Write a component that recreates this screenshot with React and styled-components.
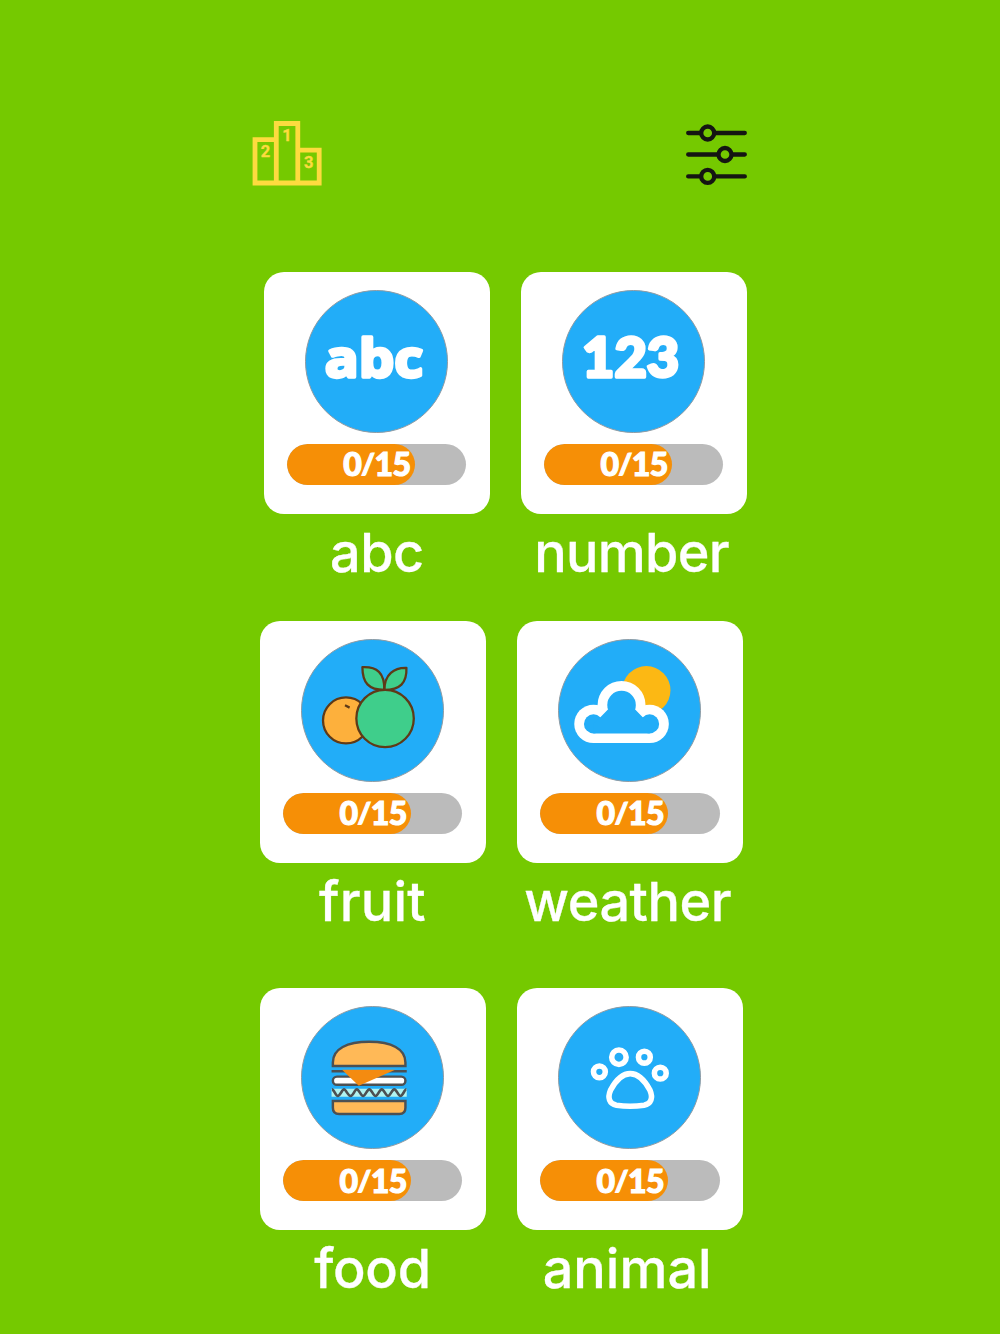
import React from "react";
import styled, { createGlobalStyle } from "styled-components";

const GlobalStyle = createGlobalStyle`
  *, *::before, *::after { box-sizing: border-box; }
  body {
    margin: 0;
    background: #75c900;
    font-family: Inter, "Liberation Sans", sans-serif;
  }
`;

const Screen = styled.main`
  width: 1000px;
  height: 1334px;
  overflow: hidden;
  padding-top: 120px;
  background: #75c900;
`;

const Toolbar = styled.header`
  display: flex;
  justify-content: space-between;
  align-items: flex-start;
  height: 151.8px;
  padding: 0 252px;
`;

const IconButton = styled.button`
  display: block;
  padding: 0;
  border: 0;
  background: none;
  svg { display: block; }
`;

const Row = styled.section`
  display: flex;
  gap: 31.2px;
  height: ${(p) => p.$height}px;
  padding-left: ${(p) => p.$indent}px;
`;

const Topic = styled.article`
  display: flex;
  flex-direction: column;
  align-items: center;
  width: 226px;
`;

const Card = styled.div`
  display: flex;
  flex-direction: column;
  align-items: center;
  width: 226px;
  height: 241.8px;
  flex: none;
  padding: 17.8px 0.6px 0 0;
  border-radius: 20px;
  background: #fff;
`;

const Badge = styled.svg`
  display: block;
  width: 143.2px;
  height: 143.2px;
  flex: none;
  border-radius: 50%;
  background: #22adf8;
  border: 0.6px solid #8f9ba3;
`;

const Track = styled.div`
  width: 179.4px;
  height: 41px;
  margin-top: 10.8px;
  border-radius: 21px;
  background: #bbb;
  overflow: hidden;
`;

const Fill = styled.div`
  display: flex;
  align-items: center;
  justify-content: flex-end;
  width: 128px;
  height: 100%;
  padding-right: 4.2px;
  border-radius: 21px;
  background: #f68f06;
`;

const Score = styled.span`
  padding-bottom: 1.5px;
  font: 900 32px/39px Lato, "Open Sans", sans-serif;
  letter-spacing: -0.5px;
  color: #fff;
  -webkit-text-stroke: 1.2px #fff;
`;

const Slash = styled.span`
  font-size: 29px;
  line-height: 1;
  vertical-align: 2.5px;
`;

const Label = styled.h2`
  margin: 6px 0 0;
  padding-right: ${(p) => p.$shift}px;
  font-family: Inter, "Liberation Sans", sans-serif;
  font-size: 54px;
  font-weight: 500;
  line-height: 66px;
  letter-spacing: ${(p) => p.$tracking}px;
  color: #fff;
  white-space: nowrap;
  -webkit-text-stroke: 0.3px #fff;
`;

const BadgeText = styled.text`
  font-family: ${(p) => p.$family}, sans-serif;
  font-weight: ${(p) => p.$weight};
  fill: #fff;
  stroke: #fff;
  stroke-width: 10px;
  stroke-linejoin: round;
`;

const Digit = styled.text`
  font: 700 16.5px Roboto, sans-serif;
  fill: #fddb3f;
  stroke: #fddb3f;
  stroke-width: 0.3px;
  text-anchor: middle;
`;

const PodiumIcon = () => (
  <svg width="70" height="67" viewBox="252 120 70 67">
    <path
      d="M276.3 183V123.5H297.8V183M276.3 139.7H255V183H319.2V150.2H297.8"
      fill="none"
      stroke="#fddb3f"
      strokeWidth="4.8"
    />
    <Digit x="265.5" y="157">2</Digit>
    <Digit x="287" y="141.2">1</Digit>
    <Digit x="308.7" y="167.7">3</Digit>
  </svg>
);

const SlidersIcon = () => (
  <svg width="62" height="67" viewBox="686 120 62 67">
    <g stroke="#151512" strokeWidth="4.3" strokeLinecap="round" fill="#75c900">
      <path d="M688.2 133H744.8M688.2 154.5H744.8M688.2 176.4H744.8" />
      <circle cx="707.7" cy="133" r="6.5" />
      <circle cx="725" cy="154.5" r="6.5" />
      <circle cx="707.7" cy="176.4" r="6.5" />
    </g>
  </svg>
);

const AbcBadge = () => (
  <Badge viewBox="164 89 430 430">
    <BadgeText $family={'"Open Sans"'} $weight={700} x="221" y="350" fontSize="160" textLength="300" lengthAdjust="spacingAndGlyphs">abc</BadgeText>
  </Badge>
);

const NumberBadge = () => (
  <Badge viewBox="156 89 430 430">
    <BadgeText $family="Lato" $weight={900} x="214" y="350" fontSize="166" textLength="296" lengthAdjust="spacingAndGlyphs">123</BadgeText>
  </Badge>
);

const FruitBadge = () => (
  <Badge viewBox="33 28 430 430">
    <g stroke="#5f3a17" strokeWidth="7" strokeLinejoin="round">
      <circle cx="167" cy="273" r="70" fill="#fdb03c" />
      <circle cx="286" cy="267" r="87.5" fill="#3fce8b" />
      <path d="M284 180C284 128 262 109 217 111C217 158 236 180 284 180Z" fill="#3fce8b" />
      <path d="M284 180C284 132 314 112 351 113C353 159 331 180 284 180Z" fill="#3fce8b" />
      <path d="M164 227L178 234" fill="none" />
    </g>
  </Badge>
);

const WeatherBadge = () => (
  <Badge viewBox="24 28 430 430">
    <circle cx="290" cy="181" r="73.5" fill="#fcb814" />
    <g fill="#fff">
      <circle cx="129" cy="283.5" r="58.5" />
      <circle cx="300" cy="283.5" r="58.5" />
      <circle cx="214.5" cy="226" r="73" />
      <path d="M129 260H300V342H129Z" />
    </g>
    <g fill="#22adf8">
      <circle cx="129" cy="283.5" r="29" />
      <circle cx="300" cy="283.5" r="29" />
      <circle cx="214.5" cy="226" r="43.5" />
      <path d="M150 263L173 240H256L279 263L300 283V312.5H129V283Z" />
    </g>
  </Badge>
);

const BurgerBadge = () => (
  <Badge viewBox="33 18 430 430">
    <g stroke="#4c5053" strokeWidth="7.5" fill="#ffb957">
      <path d="M127 198V187C127 145 170 124 238 124C305 124 348 145 348 187V198Z" />
      <path d="M127 304H348V325Q348 344 329 344H146Q127 344 127 325Z" />
      <path d="M123 213.5H352" />
      <rect x="127" y="230" width="221" height="25" rx="12.5" fill="#fff" />
    </g>
    <path d="M155 209H317L206 258Z" fill="#f48b10" />
    <path d="M123 267H352V291H123Z" fill="#b2f3f0" />
    <path
      d="M124 269C131 269 135 289 142 289S155 269 161 269S173 289 181 289S193 269 200 269S212 289 219 289S231 269 238 269S250 289 257 289S269 269 276 269S288 289 295 289S307 269 314 269S326 289 333 289S345 269 351 269"
      fill="none"
      stroke="#4c5053"
      strokeWidth="8"
    />
  </Badge>
);

const PawBadge = () => (
  <Badge viewBox="24 18 430 430">
    <g fill="none" stroke="#fff" strokeWidth="17">
      <circle cx="147" cy="215.5" r="18" />
      <circle cx="206.5" cy="171" r="22" />
      <circle cx="284" cy="171" r="18" />
      <circle cx="332.5" cy="219.5" r="18" />
      <path d="M241 221C213 221 194 247 181 271C171 295 177 313 199 317C225 321 256 321 283 317C305 313 311 295 301 271C288 247 269 221 241 221Z" />
    </g>
  </Badge>
);

const rows = [
  {
    indent: 263.8,
    height: 349.6,
    topics: [
      { label: "abc", icon: AbcBadge, tracking: -0.6, shift: 0 },
      { label: "number", icon: NumberBadge, tracking: -0.7, shift: 5 },
    ],
  },
  {
    indent: 260,
    height: 367.1,
    topics: [
      { label: "fruit", icon: FruitBadge, tracking: 0.2, shift: 1 },
      { label: "weather", icon: WeatherBadge, tracking: -0.5, shift: 5 },
    ],
  },
  {
    indent: 260,
    height: 345,
    topics: [
      { label: "food", icon: BurgerBadge, tracking: -0.3, shift: 1 },
      { label: "animal", icon: PawBadge, tracking: 0, shift: 6 },
    ],
  },
];

export default function App() {
  return (
    <>
      <GlobalStyle />
      <Screen>
        <Toolbar>
          <IconButton aria-label="Ranking"><PodiumIcon /></IconButton>
          <IconButton aria-label="Settings"><SlidersIcon /></IconButton>
        </Toolbar>
        {rows.map((row, i) => (
          <Row key={i} $indent={row.indent} $height={row.height}>
            {row.topics.map(({ label, icon: Icon, tracking, shift }) => (
              <Topic key={label}>
                <Card>
                  <Icon />
                  <Track>
                    <Fill><Score>0<Slash>/</Slash>15</Score></Fill>
                  </Track>
                </Card>
                <Label $tracking={tracking} $shift={shift}>{label}</Label>
              </Topic>
            ))}
          </Row>
        ))}
      </Screen>
    </>
  );
}
